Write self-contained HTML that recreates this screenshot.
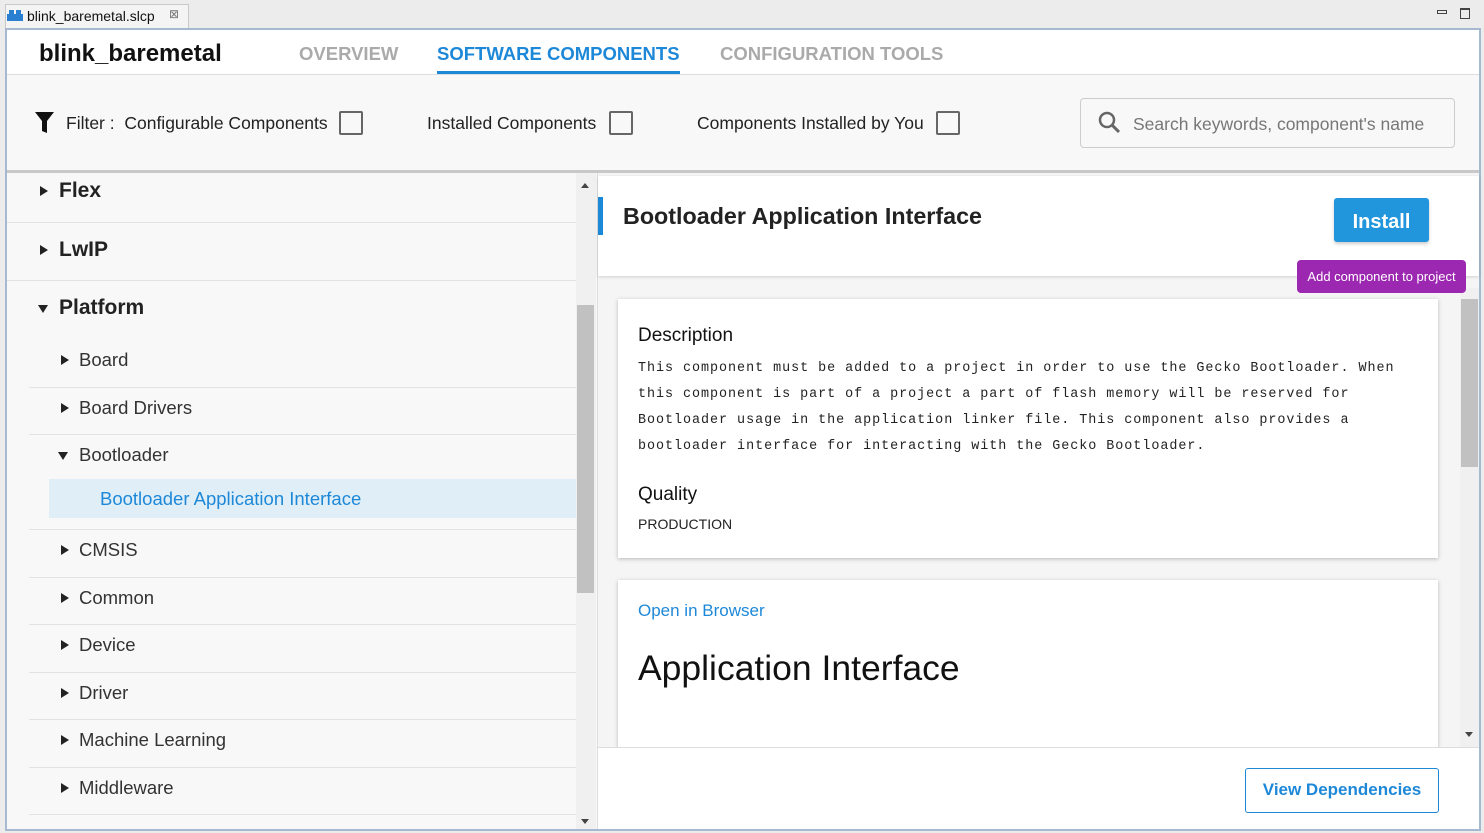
<!DOCTYPE html>
<html><head><meta charset="utf-8"><style>
*{margin:0;padding:0;box-sizing:border-box}
body{width:1484px;height:833px;position:relative;overflow:hidden;background:#ececec;font-family:"Liberation Sans",sans-serif}
.a{position:absolute}
.t{position:absolute;white-space:nowrap}
.sep{position:absolute;height:1px;background:#e2e2e2}
.tri{position:absolute;width:0;height:0;border-top:5px solid transparent;border-bottom:5px solid transparent;border-left:8px solid #222}
.trid{position:absolute;width:0;height:0;border-left:5px solid transparent;border-right:5px solid transparent;border-top:8px solid #222}
.cb{position:absolute;width:24px;height:24px;border:2px solid #666;border-radius:2px}
</style></head><body>
<div class="a" style="left:5px;top:4px;width:184px;height:25px;background:#f4f4f4;border:1px solid #c9c9c9;border-bottom:none"></div>
<svg class="a" style="left:7px;top:9px" width="16" height="12"><rect x="0" y="5" width="16" height="7" fill="#2a7fd0"/><rect x="2" y="1" width="5" height="5" fill="#2a7fd0"/><rect x="9" y="1" width="5" height="5" fill="#2a7fd0"/></svg>
<div class="t" style="left:27px;top:8px;font-size:14px;color:#111">blink_baremetal.slcp</div>
<div class="t" style="left:169px;top:7px;font-size:12px;color:#777">⊠</div>
<div class="a" style="left:1437px;top:10px;width:10px;height:4px;border:1px solid #444"></div>
<div class="a" style="left:1460px;top:8px;width:10px;height:11px;border:1px solid #444;border-top-width:2px"></div>
<div class="a" style="left:5px;top:28px;width:1476px;height:803px;border:2px solid #a7b9d1;background:#f8f8f8"></div>
<div class="a" style="left:7px;top:30px;width:1472px;height:45px;background:#fff;border-bottom:1px solid #ddd"></div>
<div class="t" style="left:39px;top:40px;font-size:24px;font-weight:bold;color:#111">blink_baremetal</div>
<div class="t" style="left:299px;top:43px;font-size:18.5px;font-weight:bold;color:#aaa">OVERVIEW</div>
<div class="t" style="left:437px;top:43px;font-size:18.5px;font-weight:bold;color:#1e88d8">SOFTWARE COMPONENTS</div>
<div class="a" style="left:437px;top:71px;width:243px;height:3px;background:#1e88d8"></div>
<div class="t" style="left:720px;top:43px;font-size:18.5px;font-weight:bold;color:#aaa">CONFIGURATION TOOLS</div>
<svg class="a" style="left:35px;top:112px" width="20" height="22"><path d="M0 0H19L12 9V21L7 19V9Z" fill="#111"/></svg>
<div class="t" style="left:66px;top:113px;font-size:17.5px;color:#222">Filter :&nbsp; Configurable Components</div>
<div class="cb" style="left:339px;top:111px"></div>
<div class="t" style="left:427px;top:113px;font-size:17.5px;color:#222">Installed Components</div>
<div class="cb" style="left:609px;top:111px"></div>
<div class="t" style="left:697px;top:113px;font-size:17.5px;color:#222">Components Installed by You</div>
<div class="cb" style="left:936px;top:111px"></div>
<div class="a" style="left:1080px;top:98px;width:375px;height:50px;border:1px solid #ccc;border-radius:4px;background:#f8f8f8"></div>
<svg class="a" style="left:1098px;top:111px" width="24" height="24"><circle cx="9" cy="9" r="7" stroke="#666" stroke-width="2.5" fill="none"/><path d="M14 14L21 21" stroke="#666" stroke-width="3"/></svg>
<div class="t" style="left:1133px;top:114px;font-size:17.5px;color:#777">Search keywords, component's name</div>
<div class="a" style="left:7px;top:170px;width:1472px;height:3px;background:#c8c8c8"></div>
<div class="a" style="left:7px;top:173px;width:569px;height:656px;background:#f8f8f8"></div>
<div class="tri" style="left:40px;top:186px"></div><div class="t" style="left:59px;top:179px;font-size:21px;font-weight:bold;color:#222">Flex</div>
<div class="sep" style="left:7px;top:222px;width:569px"></div>
<div class="tri" style="left:40px;top:245px"></div><div class="t" style="left:59px;top:238px;font-size:21px;font-weight:bold;color:#222">LwIP</div>
<div class="sep" style="left:7px;top:280px;width:569px"></div>
<div class="trid" style="left:38px;top:305px"></div><div class="t" style="left:59px;top:296px;font-size:21px;font-weight:bold;color:#222">Platform</div>
<div class="tri" style="left:61px;top:355px"></div><div class="t" style="left:79px;top:349px;font-size:18.5px;color:#333">Board</div>
<div class="sep" style="left:29px;top:387px;width:547px"></div>
<div class="tri" style="left:61px;top:403px"></div><div class="t" style="left:79px;top:397px;font-size:18.5px;color:#333">Board Drivers</div>
<div class="sep" style="left:29px;top:434px;width:547px"></div>
<div class="trid" style="left:58px;top:452px"></div><div class="t" style="left:79px;top:444px;font-size:18.5px;color:#333">Bootloader</div>
<div class="a" style="left:49px;top:479px;width:527px;height:39px;background:#e0eff7"></div>
<div class="t" style="left:100px;top:488px;font-size:18.5px;color:#1e88d8">Bootloader Application Interface</div>
<div class="sep" style="left:29px;top:529px;width:547px"></div>
<div class="tri" style="left:61px;top:545px"></div><div class="t" style="left:79px;top:539px;font-size:18.5px;color:#333">CMSIS</div>
<div class="sep" style="left:29px;top:577px;width:547px"></div>
<div class="tri" style="left:61px;top:593px"></div><div class="t" style="left:79px;top:587px;font-size:18.5px;color:#333">Common</div>
<div class="sep" style="left:29px;top:624px;width:547px"></div>
<div class="tri" style="left:61px;top:640px"></div><div class="t" style="left:79px;top:634px;font-size:18.5px;color:#333">Device</div>
<div class="sep" style="left:29px;top:672px;width:547px"></div>
<div class="tri" style="left:61px;top:688px"></div><div class="t" style="left:79px;top:682px;font-size:18.5px;color:#333">Driver</div>
<div class="sep" style="left:29px;top:719px;width:547px"></div>
<div class="tri" style="left:61px;top:735px"></div><div class="t" style="left:79px;top:729px;font-size:18.5px;color:#333">Machine Learning</div>
<div class="sep" style="left:29px;top:767px;width:547px"></div>
<div class="tri" style="left:61px;top:783px"></div><div class="t" style="left:79px;top:777px;font-size:18.5px;color:#333">Middleware</div>
<div class="sep" style="left:29px;top:814px;width:547px"></div>
<div class="a" style="left:576px;top:173px;width:20px;height:656px;background:#f0f0f0"></div>
<div class="a" style="left:577px;top:305px;width:17px;height:288px;background:#c1c1c1"></div>
<div class="a" style="left:581px;top:183px;border-left:4px solid transparent;border-right:4px solid transparent;border-bottom:5px solid #444"></div>
<div class="a" style="left:581px;top:819px;border-left:4px solid transparent;border-right:4px solid transparent;border-top:5px solid #444"></div>
<div class="a" style="left:597px;top:173px;width:882px;height:656px;background:#f5f5f5;border-left:1px solid #ddd"></div>
<div class="a" style="left:598px;top:176px;width:881px;height:100px;background:#fff;box-shadow:0 1px 3px rgba(0,0,0,.15)"></div>
<div class="a" style="left:598px;top:197px;width:5px;height:38px;background:#1e88d8"></div>
<div class="t" style="left:623px;top:203px;font-size:23.3px;font-weight:bold;color:#222">Bootloader Application Interface</div>
<div class="a" style="left:1334px;top:198px;width:95px;height:44px;background:#2196dc;border-radius:3px;box-shadow:0 2px 3px rgba(0,0,0,.2)"></div>
<div class="t" style="left:1334px;top:211px;width:95px;text-align:center;font-size:20px;font-weight:bold;color:#fff">Install</div>
<div class="a" style="left:1460px;top:288px;width:19px;height:460px;background:#f0f0f0"></div>
<div class="a" style="left:1461px;top:299px;width:17px;height:168px;background:#c1c1c1"></div>
<div class="a" style="left:1465px;top:732px;border-left:4px solid transparent;border-right:4px solid transparent;border-top:5px solid #444"></div>
<div class="a" style="left:618px;top:299px;width:820px;height:259px;background:#fff;box-shadow:0 1px 4px rgba(0,0,0,.25)"></div>
<div class="t" style="left:638px;top:325px;font-size:19px;color:#111">Description</div>
<div class="a" style="left:638px;top:356px;font-family:'Liberation Mono',monospace;font-size:13.4px;line-height:26px;color:#222;white-space:pre;letter-spacing:0.97px">This component must be added to a project in order to use the Gecko Bootloader. When
this component is part of a project a part of flash memory will be reserved for
Bootloader usage in the application linker file. This component also provides a
bootloader interface for interacting with the Gecko Bootloader.</div>
<div class="t" style="left:638px;top:484px;font-size:19px;color:#111">Quality</div>
<div class="t" style="left:638px;top:516px;font-size:14px;color:#222">PRODUCTION</div>
<div class="a" style="left:618px;top:580px;width:820px;height:180px;background:#fff;box-shadow:0 1px 4px rgba(0,0,0,.25)"></div>
<div class="t" style="left:638px;top:601px;font-size:17px;color:#1e88d8">Open in Browser</div>
<div class="t" style="left:638px;top:648px;font-size:35.5px;color:#111">Application Interface</div>
<div class="a" style="left:1297px;top:260px;width:169px;height:33px;background:#9c27b0;border-radius:4px"></div>
<div class="t" style="left:1297px;top:269px;width:169px;text-align:center;font-size:13px;color:#fff">Add component to project</div>
<div class="a" style="left:598px;top:747px;width:881px;height:82px;background:#fff;border-top:1px solid #ddd"></div>
<div class="a" style="left:1245px;top:768px;width:194px;height:45px;border:1.5px solid #1e88d8;border-radius:3px"></div>
<div class="t" style="left:1245px;top:780px;width:194px;text-align:center;font-size:17px;font-weight:bold;color:#1e88d8">View Dependencies</div>
</body></html>
